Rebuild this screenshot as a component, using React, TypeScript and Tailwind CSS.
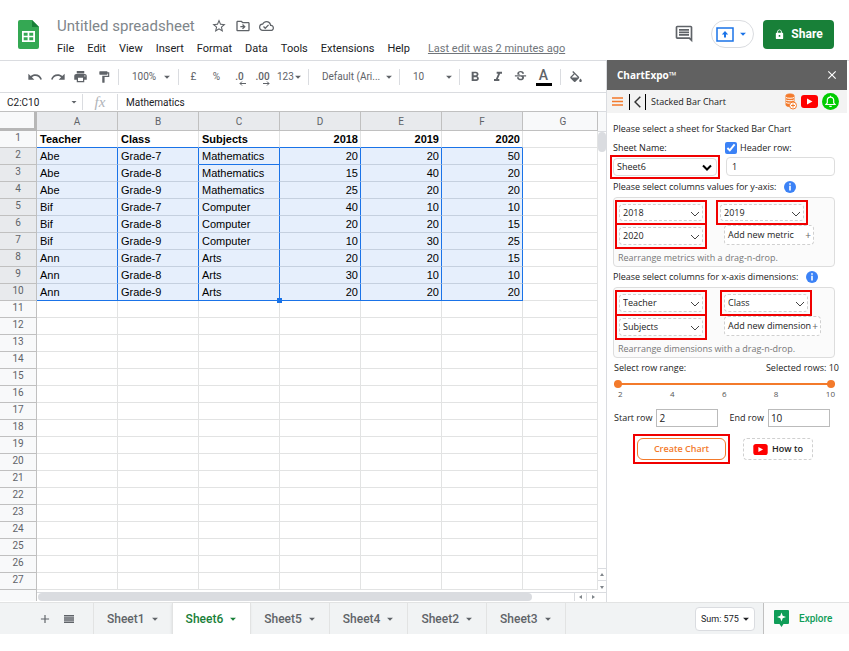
import React, { useState } from 'react';
import clsx from 'clsx';
import {
  MdAdd,
  MdArrowDropDown,
  MdClose,
  MdFormatBold,
  MdFormatItalic,
  MdFormatPaint,
  MdLock,
  MdOutlineCloudDone,
  MdOutlineDriveFileMove,
  MdOutlineInsertComment,
  MdPrint,
  MdRedo,
  MdStarBorder,
  MdStrikethroughS,
  MdUndo,
} from 'react-icons/md';

const MENUS = ['File', 'Edit', 'View', 'Insert', 'Format', 'Data', 'Tools', 'Extensions', 'Help'];
const COLUMNS = ['A', 'B', 'C', 'D', 'E', 'F', 'G'];
const SHEETS = ['Sheet1', 'Sheet6', 'Sheet5', 'Sheet4', 'Sheet2', 'Sheet3'];
const FIELDS = ['Teacher', 'Class', 'Subjects', '2018', '2019', '2020'];
const ROW_COUNT = 27;

const DATA: string[][] = [
  ['Teacher', 'Class', 'Subjects', '2018', '2019', '2020'],
  ['Abe', 'Grade-7', 'Mathematics', '20', '20', '50'],
  ['Abe', 'Grade-8', 'Mathematics', '15', '40', '20'],
  ['Abe', 'Grade-9', 'Mathematics', '25', '20', '20'],
  ['Bif', 'Grade-7', 'Computer', '40', '10', '10'],
  ['Bif', 'Grade-8', 'Computer', '20', '20', '15'],
  ['Bif', 'Grade-9', 'Computer', '10', '30', '25'],
  ['Ann', 'Grade-7', 'Arts', '20', '20', '15'],
  ['Ann', 'Grade-8', 'Arts', '30', '10', '10'],
  ['Ann', 'Grade-9', 'Arts', '20', '20', '20'],
];

const SheetsLogo: React.FC = () => (
  <svg viewBox="0 0 21 29" className="w-[21px] h-[29px]" aria-hidden="true">
    <path d="M2 0h12l7 7v20a2 2 0 0 1-2 2H2a2 2 0 0 1-2-2V2a2 2 0 0 1 2-2z" fill="#34a853" />
    <path d="M14 0l7 7h-7z" fill="#188038" />
    <path
      d="M4 11v11h13V11H4zm1.700 1.700h3.900v3h-3.900v-3zm5.600 0h3.900v3h-3.900v-3zm-5.600 4.600h3.900v3h-3.900v-3zm5.600 0h3.900v3h-3.900v-3z"
      fill="#fff"
    />
  </svg>
);

const YouTubeIcon: React.FC<{ className?: string }> = ({ className }) => (
  <svg viewBox="0 0 17 13" className={className} aria-hidden="true">
    <rect width="17" height="13" rx="3" fill="#f00" />
    <path d="M6 3.500v6l5.500-3z" fill="#fff" />
  </svg>
);

const InfoIcon: React.FC = () => (
  <svg viewBox="0 0 12 12" className="w-3 h-3" aria-hidden="true">
    <circle cx="6" cy="6" r="6" fill="#3b82f6" />
    <path d="M5.200 2.200h1.600v1.600H5.200zM5.200 4.800h1.600v4.700H5.200z" fill="#fff" />
  </svg>
);

const Chevron: React.FC<{ className?: string }> = ({ className }) => (
  <svg viewBox="0 0 10 6" className={className} fill="none" stroke="currentColor" aria-hidden="true">
    <path d="M1 1l4 4 4-4" />
  </svg>
);

const Separator = () => <span className="w-px h-4 bg-[#dadce0] shrink-0" />;

const ToolButton: React.FC<{ label: string; children: React.ReactNode }> = ({ label, children }) => (
  <button aria-label={label} className="w-[23px] h-6 flex items-center justify-center shrink-0">
    {children}
  </button>
);

const Header: React.FC = () => (
  <header className="flex h-[60px] pl-[18px] pr-[15px] border-b border-[#dadce0] box-content">
    <div className="pt-5">
      <SheetsLogo />
    </div>
    <div className="pl-[18px] pt-4 flex-1">
      <div className="flex items-center h-5 text-[#5f6368]">
        <h1 className="text-[15px] leading-5 text-[#80868b]">Untitled spreadsheet</h1>
        <div className="flex items-center gap-2 pl-4">
          <button aria-label="Star">
            <MdStarBorder className="w-4 h-4" />
          </button>
          <button aria-label="Move">
            <MdOutlineDriveFileMove className="w-4 h-4" />
          </button>
          <button aria-label="Document status">
            <MdOutlineCloudDone className="w-[15px] h-4" />
          </button>
        </div>
      </div>
      <nav className="flex items-center gap-[13px] pt-1 text-[11px] leading-[18px] text-[#202124]">
        {MENUS.map((menu) => (
          <button key={menu}>{menu}</button>
        ))}
        <a href="#history" className="pl-[5px] text-[#70757a] underline">
          Last edit was 2 minutes ago
        </a>
      </nav>
    </div>
    <div className="flex items-center h-7 mt-5">
      <button aria-label="Comments" className="text-[#5f6368]">
        <MdOutlineInsertComment className="w-5 h-5" />
      </button>
      <button
        aria-label="Present"
        className="flex items-center justify-center gap-0.5 ml-[17px] w-[43px] h-7 rounded-full border border-[#dadce0] text-[#1a73e8]"
      >
        <svg viewBox="0 0 18 15" className="w-[18px] h-[15px]" fill="none" stroke="currentColor" strokeWidth="1.500">
          <rect x="1" y="1" width="16" height="13" />
          <path d="M9 4l3.200 3.500H10v3H8v-3H5.800z" fill="currentColor" stroke="none" />
        </svg>
        <MdArrowDropDown className="w-3.5 h-3.5" />
      </button>
      <button className="flex items-center justify-center gap-1.5 ml-[9px] w-[71px] h-[29px] rounded bg-[#188038] text-white text-xs font-bold">
        <MdLock className="w-[11px] h-[11px]" />
        Share
      </button>
    </div>
  </header>
);

const Toolbar: React.FC = () => (
  <div className="flex items-center h-8 pl-[23px] border-b border-[#dadce0] text-[#5f6368] text-[10px]">
    <ToolButton label="Undo">
      <MdUndo className="w-4 h-4" />
    </ToolButton>
    <ToolButton label="Redo">
      <MdRedo className="w-4 h-4" />
    </ToolButton>
    <ToolButton label="Print">
      <MdPrint className="w-[15px] h-[15px]" />
    </ToolButton>
    <ToolButton label="Paint format">
      <MdFormatPaint className="w-[14px] h-[14px]" />
    </ToolButton>
    <span className="w-[3px]" />
    <Separator />
    <button className="flex items-center justify-between w-[59px] pl-[13px] pr-1">
      100%
      <MdArrowDropDown className="w-3.5 h-3.5" />
    </button>
    <Separator />
    <span className="w-[3px]" />
    <ToolButton label="Format as currency">£</ToolButton>
    <ToolButton label="Format as percent">%</ToolButton>
    <ToolButton label="Decrease decimal places">
      <span className="relative font-medium">
        .0
        <svg viewBox="0 0 7 5" className="absolute top-3 left-1 w-[7px] h-[5px]" fill="none" stroke="currentColor">
          <path d="M7 2.500H1M3 .5l-2 2 2 2" />
        </svg>
      </span>
    </ToolButton>
    <ToolButton label="Increase decimal places">
      <span className="relative font-medium">
        .00
        <svg viewBox="0 0 7 5" className="absolute top-3 left-2 w-[7px] h-[5px]" fill="none" stroke="currentColor">
          <path d="M0 2.500h6M4 .5l2 2-2 2" />
        </svg>
      </span>
    </ToolButton>
    <button className="flex items-center w-[34px] pl-[3px]">
      123
      <MdArrowDropDown className="w-3.5 h-3.5 shrink-0 -ml-[3px]" />
    </button>
    <Separator />
    <button className="flex items-center justify-between w-[90px] pl-[13px] pr-[3px]">
      Default (Ari...
      <MdArrowDropDown className="w-3.5 h-3.5" />
    </button>
    <Separator />
    <button className="flex items-center justify-between w-[59px] pl-[13px] pr-[3px]">
      10
      <MdArrowDropDown className="w-3.5 h-3.5" />
    </button>
    <Separator />
    <span className="w-[3px]" />
    <ToolButton label="Bold">
      <MdFormatBold className="w-4 h-4" />
    </ToolButton>
    <ToolButton label="Italic">
      <MdFormatItalic className="w-4 h-4" />
    </ToolButton>
    <ToolButton label="Strikethrough">
      <MdStrikethroughS className="w-[15px] h-[15px]" />
    </ToolButton>
    <ToolButton label="Text color">
      <span className="w-4 border-b-[3px] border-black text-sm leading-4 font-medium">A</span>
    </ToolButton>
    <span className="w-[5px]" />
    <Separator />
    <span className="w-[3px]" />
    <ToolButton label="Fill color">
      <svg viewBox="3 0 18 17" className="w-3 h-[11px]" fill="currentColor">
        <path d="M16.560 8.940L7.620 0 6.210 1.410l2.380 2.380-5.150 5.150c-.59.59-.59 1.540 0 2.120l5.500 5.500c.29.29.68.44 1.060.44s.77-.15 1.060-.44l5.500-5.500c.59-.58.59-1.530 0-2.120zM5.210 10L10 5.210 14.790 10H5.210zM19 11.500s-2 2.170-2 3.500c0 1.100.9 2 2 2s2-.9 2-2c0-1.330-2-3.500-2-3.500z" />
      </svg>
    </ToolButton>
  </div>
);

const FormulaBar: React.FC = () => (
  <div className="flex items-center h-[18px] text-[10px] text-[#202124]">
    <button className="flex items-center justify-between w-[82px] pl-[7px] pr-0.5">
      C2:C10
      <MdArrowDropDown className="w-3 h-3 text-[#5f6368]" />
    </button>
    <Separator />
    <span className="w-[34px] text-center font-['Liberation_Serif',serif] italic text-[15px] leading-4 text-[#b0b3b8]">fx</span>
    <Separator />
    <input aria-label="Formula" defaultValue="Mathematics" className="flex-1 min-w-0 pl-2 outline-none" />
  </div>
);

const cellClass = (row: number, col: number) => {
  const selected = row >= 2 && row <= 10 && col <= 5;
  return clsx(
    'relative h-[17px] p-0 px-[3px] border-r border-b leading-4 whitespace-nowrap',
    selected ? 'bg-[#e6effc]' : 'bg-white',
    col >= 3 ? 'text-right pr-0.5' : 'text-left',
    row === 1 && 'font-bold',
    selected ? 'border-r-[#1a73e8]' : 'border-r-[#e2e3e3]',
    (row === 1 || row === 10) && col <= 5
      ? 'border-b-[#1a73e8]'
      : row === 2 && col === 2
        ? 'border-b-[#1a73e8]'
        : selected
          ? 'border-b-[#c5d0df]'
          : 'border-b-[#e2e3e3]'
  );
};

const Grid: React.FC = () => (
  <div className="flex">
    <div className="flex-1 min-w-0">
      <table className="w-full table-fixed border-separate border-spacing-0 border-t border-[#c0c0c0] font-['Liberation_Sans',Arial,sans-serif] text-[11px] text-black">
        <colgroup>
          <col className="w-[37px]" />
          {COLUMNS.map((c) => (
            <col key={c} className={c === 'G' ? '' : 'w-[81px]'} />
          ))}
        </colgroup>
        <thead>
          <tr>
            <th className="h-[19px] p-0 bg-[#f8f9fa] border-r-[3px] border-b-[3px] border-[#b7b7b7]" />
            {COLUMNS.map((c) => (
              <th
                key={c}
                scope="col"
                className={clsx(
                  "p-0 pt-px h-[19px] border-r border-b border-[#c0c0c0] font-['Roboto',sans-serif] text-[10px] leading-4 font-normal text-[#5f6368]",
                  c === 'G' ? 'pl-1.5 bg-[#f8f9fa]' : 'bg-[#e8eaed]'
                )}
              >
                {c}
              </th>
            ))}
          </tr>
        </thead>
        <tbody>
          {Array.from({ length: ROW_COUNT }, (_, i) => i + 1).map((row) => (
            <tr key={row}>
              <th
                scope="row"
                className={clsx(
                  "h-[17px] p-0 pb-0.5 border-r border-b border-[#c0c0c0] font-['Roboto',sans-serif] text-[10px] leading-[14px] font-normal text-[#5f6368]",
                  row >= 2 && row <= 10 ? 'bg-[#e8eaed]' : 'bg-[#f8f9fa]'
                )}
              >
                {row}
              </th>
              {COLUMNS.map((c, col) => (
                <td key={c} className={cellClass(row, col)}>
                  {DATA[row - 1]?.[col]}
                  {row === 10 && col === 2 && (
                    <span className="absolute z-10 -right-[3px] -bottom-[3px] w-[5px] h-[5px] bg-[#1a73e8]" />
                  )}
                </td>
              ))}
            </tr>
          ))}
        </tbody>
      </table>
      <div className="flex h-3 pb-px">
        <span className="w-[37px] border-r border-[#c0c0c0] bg-[#f8f9fa]" />
        <div className="flex-1 flex flex-col">
          <div className="h-[3px] border-b border-[#dadce0]" />
          <div className="flex flex-1">
            <div className="flex-1 pr-[42px]">
              <div className="h-2 ml-px rounded-full bg-[#dadce0]" />
            </div>
            <button aria-label="Scroll left" className="w-3 flex items-center justify-center border-l border-[#dadce0]">
              <svg viewBox="0 0 4 4" className="w-1 h-1 fill-[#80868b]"><path d="M3 0v4L0 2z" /></svg>
            </button>
            <button aria-label="Scroll right" className="w-3 flex items-center justify-center border-l border-[#dadce0]">
              <svg viewBox="0 0 4 4" className="w-1 h-1 fill-[#80868b]"><path d="M1 0v4l3-2z" /></svg>
            </button>
          </div>
        </div>
      </div>
    </div>
    <div className="flex flex-col w-2 border-t border-[#dadce0] bg-white">
      <div className="h-5 bg-[#f8f9fa] border-b border-[#dadce0]" />
      <div className="flex-1">
        <div className="h-5 rounded-full bg-[#dadce0]" />
      </div>
      <button aria-label="Scroll up" className="h-3 flex items-center justify-center border-t border-[#dadce0]">
        <svg viewBox="0 0 4 4" className="w-1 h-1 fill-[#80868b]"><path d="M0 3h4L2 0z" /></svg>
      </button>
      <button aria-label="Scroll down" className="h-3 flex items-center justify-center border-t border-[#dadce0]">
        <svg viewBox="0 0 4 4" className="w-1 h-1 fill-[#80868b]"><path d="M0 1h4L2 4z" /></svg>
      </button>
      <div className="h-2.5 border-t border-[#dadce0]" />
    </div>
  </div>
);

const FieldSelect: React.FC<{ value: string; className?: string }> = ({ value, className }) => (
  <div className={clsx('relative w-[92px] p-0.5 border-2 border-[#f00000]', className)}>
    <select
      aria-label={`Column ${value}`}
      defaultValue={value}
      className="block w-full h-full pl-[3px] appearance-none rounded-sm border border-dashed border-[#d0d0d0] bg-white outline-none"
    >
      {FIELDS.map((f) => (
        <option key={f}>{f}</option>
      ))}
    </select>
    <Chevron className="absolute right-[5px] top-[9px] w-2.5 h-[6px] text-[#444] pointer-events-none" />
  </div>
);

const AddButton: React.FC<{ label: string; className?: string }> = ({ label, className }) => (
  <button
    className={clsx(
      'flex items-center justify-between h-5 pl-[3px] pr-0.5 rounded-sm border border-dashed border-[#d0d0d0] bg-white whitespace-nowrap',
      className
    )}
  >
    {label}
    <span className="text-[10px] leading-4 text-[#666]">+</span>
  </button>
);

const RangeSlider: React.FC = () => {
  const [start, setStart] = useState(2);
  const [end, setEnd] = useState(10);
  const rangeClass =
    'absolute inset-0 w-full h-2 appearance-none bg-transparent pointer-events-none [&::-webkit-slider-thumb]:appearance-none [&::-webkit-slider-thumb]:pointer-events-auto [&::-webkit-slider-thumb]:w-2 [&::-webkit-slider-thumb]:h-2 [&::-webkit-slider-thumb]:rounded-full [&::-webkit-slider-thumb]:bg-[#f37a2b]';

  return (
    <div className="pt-[5px] pr-1">
      <div className="relative h-2 flex items-center">
        <div className="w-full h-0.5 bg-[#f37a2b]" />
        <input aria-label="First row" type="range" min="2" max="10" value={start} onChange={(e) => setStart(parseInt(e.target.value))} className={rangeClass} />
        <input aria-label="Last row" type="range" min="2" max="10" value={end} onChange={(e) => setEnd(parseInt(e.target.value))} className={rangeClass} />
      </div>
      <div className="flex justify-between pl-1 text-[8px] leading-3 text-[#555]">
        {[2, 4, 6, 8, 10].map((n) => (
          <span key={n}>{n}</span>
        ))}
      </div>
    </div>
  );
};

const Sidebar: React.FC = () => (
  <aside className="w-[241px] mr-0.5 border-l border-[#dadce0] bg-white font-['Open_Sans','Noto_Sans',sans-serif] text-[9px] text-[#222]">
    <div className="flex items-center justify-between h-[30px] -mt-px box-content pl-2.5 pr-2 bg-[#616161] text-white">
      <h2 className="text-[10px] font-bold">ChartExpo™</h2>
      <button aria-label="Close">
        <MdClose className="w-3.5 h-3.5" />
      </button>
    </div>
    <div className="flex items-center h-[23px] pl-[5px] pr-2 bg-[#f3f3f3]">
      <button aria-label="Menu">
        <svg viewBox="0 0 11 9" className="w-[11px] h-[9px]" stroke="#f37a2b" strokeWidth="1.400">
          <path d="M0 1h11M0 4.500h11M0 8h11" />
        </svg>
      </button>
      <button aria-label="Back" className="flex items-center justify-center ml-1.5 w-[17px] h-4 border-x border-black">
        <svg viewBox="0 0 7 12" className="w-[7px] h-3" fill="none" stroke="#333" strokeWidth="1.500">
          <path d="M6.300.8L1 6l5.300 5.200" />
        </svg>
      </button>
      <h3 className="flex-1 pl-[5px]">Stacked Bar Chart</h3>
      <div className="flex items-center gap-1">
        <button aria-label="Data">
          <svg viewBox="0 0 12 17" className="w-3 h-[17px]" fill="none" stroke="#f37a2b">
            <path d="M1 2.500c0-2 8-2 8 0v9.500c0 2-8 2-8 0z" fill="#f37a2b" />
            <path d="M1 4.500c1 1 7 1 8 0M1 7c1 1 7 1 8 0M1 9.500c1 1 7 1 8 0" stroke="#fff" />
            <circle cx="8" cy="12.500" r="3.500" fill="#fff" />
            <path d="M8 10.500v4M6 12.500h4" />
          </svg>
        </button>
        <button aria-label="Video">
          <YouTubeIcon className="w-[17px] h-[13px]" />
        </button>
        <button aria-label="Notifications">
          <svg viewBox="0 0 17 17" className="w-[17px] h-[17px]" fill="none" stroke="#fff" strokeWidth="1.200">
            <circle cx="8.500" cy="8.500" r="8.500" fill="#0c0" stroke="none" />
            <path d="M4 11.500h9l-1.300-1.700V7.300a3.200 3.200 0 0 0-6.400 0v2.500zM8.500 4V2.700M7.300 13.300h2.400" />
          </svg>
        </button>
      </div>
    </div>

    <div className="pl-1.5 pr-3">
      <p className="pt-[9px] leading-[14px]">Please select a sheet for Stacked Bar Chart</p>
      <div className="grid grid-cols-2 gap-x-1 pt-[5px]">
        <div>
          <label htmlFor="sheet" className="block leading-[14px]">Sheet Name:</label>
          <div className="relative -ml-[3px] w-[110px] h-6 p-px border-2 border-[#f00000]">
            <select
              id="sheet"
              defaultValue="Sheet6"
              className="block w-full h-full pl-[3px] appearance-none rounded border border-[#ddd] bg-white outline-none"
            >
              {SHEETS.map((s) => (
                <option key={s}>{s}</option>
              ))}
            </select>
            <Chevron className="absolute right-1.5 top-[7px] w-2.5 h-[7px] text-black stroke-2 pointer-events-none" />
          </div>
        </div>
        <div>
          <label className="flex items-center gap-[3px] h-[14px]">
            <input type="checkbox" defaultChecked className="w-3 h-3 -ml-px accent-[#3b82f6]" />
            Header row:
          </label>
          <input
            aria-label="Header row number"
            defaultValue="1"
            className="block w-full h-[19px] mt-0.5 pl-[5px] rounded border border-[#ddd] outline-none"
          />
        </div>
      </div>

      <div className="flex items-center gap-2 h-[15px] mb-[3px]">
        Please select columns values for y-axis: <InfoIcon />
      </div>
      <div className="rounded border border-[#ddd] bg-[#fbfbfb] p-px pt-0.5">
        <div className="flex justify-between pr-[19px]">
          <div>
            <FieldSelect value="2018" className="h-[25px]" />
            <FieldSelect value="2020" className="h-[26px] -mt-0.5" />
          </div>
          <div>
            <FieldSelect value="2019" className="h-[25px]" />
            <AddButton label="Add new metric" className="w-[90px] ml-2" />
          </div>
        </div>
        <p className="pl-[3px] pt-0.5 leading-[14px] text-[#777]">Rearrange metrics with a drag-n-drop.</p>
      </div>

      <div className="flex items-center gap-2 h-5">
        Please select columns for x-axis dimensions: <InfoIcon />
      </div>
      <div className="rounded border border-[#ddd] bg-[#fbfbfb] p-px pt-0.5">
        <div className="flex justify-between pr-3">
          <div>
            <FieldSelect value="Teacher" className="h-[26px]" />
            <FieldSelect value="Subjects" className="h-[26px] -mt-0.5" />
          </div>
          <div>
            <FieldSelect value="Class" className="h-[26px]" />
            <AddButton label="Add new dimension" className="w-[97px] ml-1" />
          </div>
        </div>
        <p className="pl-[3px] pt-0.5 leading-[14px] text-[#777]">Rearrange dimensions with a drag-n-drop.</p>
      </div>
    </div>

    <div className="pl-[7px] pr-2 pt-[3px]">
      <div className="flex justify-between leading-[14px]">
        <span>Select row range:</span>
        <span>Selected rows: 10</span>
      </div>
      <RangeSlider />
    </div>

    <div className="flex items-center gap-1 pl-[7px] pt-[9px]">
      <label htmlFor="start-row">Start row</label>
      <input id="start-row" defaultValue="2" className="w-[62px] h-[18px] pl-0.5 border border-[#bbb] text-[10px] outline-none" />
      <label htmlFor="end-row" className="ml-[7px]">End row</label>
      <input id="end-row" defaultValue="10" className="w-[62px] h-[18px] pl-0.5 border border-[#bbb] text-[10px] outline-none" />
    </div>

    <div className="flex items-center gap-[13px] pl-[26px] pt-[7px]">
      <div className="w-[97px] h-[30px] p-0.5 border-2 border-[#f00000]">
        <button className="w-full h-full rounded-md border border-[#f37a2b] text-[#f37a2b] font-semibold">
          Create Chart
        </button>
      </div>
      <button className="flex items-center justify-center gap-1 w-[70px] h-[22px] rounded border border-dashed border-[#d0d0d0] font-semibold">
        <YouTubeIcon className="w-[15px] h-[11px]" />
        How to
      </button>
    </div>
  </aside>
);

const Footer: React.FC = () => {
  const [active, setActive] = useState('Sheet6');

  return (
    <footer className="flex h-8 border-t border-[#e2e3e3] bg-[#f1f3f4] text-xs text-[#5f6368]">
      <div className="flex items-center gap-3 w-[93px] pl-[38px]">
        <button aria-label="Add sheet">
          <MdAdd className="w-[14px] h-[14px]" />
        </button>
        <button aria-label="All sheets">
          <svg viewBox="0 0 10 8" className="w-2.5 h-2" stroke="currentColor" strokeWidth="1.500">
            <path d="M0 .8h10M0 2.900h10M0 5.100h10M0 7.200h10" />
          </svg>
        </button>
      </div>
      {SHEETS.map((sheet) => (
        <button
          key={sheet}
          onClick={() => setActive(sheet)}
          className={clsx(
            'flex items-center gap-[3px] pl-[13px] pr-2.5 border-l border-[#e2e3e3] font-medium',
            sheet === active && 'bg-white text-[#188038] shadow'
          )}
        >
          {sheet}
          <MdArrowDropDown className="w-3.5 h-3.5" />
        </button>
      ))}
      <div className="flex-1 flex items-center justify-end pr-2 border-l border-[#e2e3e3]">
        <button className="flex items-center justify-between w-[60px] h-6 pl-[5px] pr-px rounded border border-[#dadce0] bg-white text-[9px] text-[#202124] whitespace-nowrap">
          Sum: 575
          <MdArrowDropDown className="w-3.5 h-3.5 shrink-0" />
        </button>
      </div>
      <button className="flex items-center gap-2.5 w-[86px] pl-2.5 border-l border-[#c0c0c0] bg-[#fbfbfb] text-[10px] font-medium text-[#0f9d58]">
        <svg viewBox="0 0 15 17" className="w-[15px] h-[17px]" aria-hidden="true">
          <path d="M1 0h13a1 1 0 0 1 1 1v12a1 1 0 0 1-1 1H9.500l-2 3-2-3H1a1 1 0 0 1-1-1V1a1 1 0 0 1 1-1z" fill="#0f9d58" />
          <path d="M7.500 2.500l1.200 3.300L12 7l-3.300 1.200-1.200 3.300-1.200-3.300L3 7l3.300-1.200z" fill="#fff" />
        </svg>
        Explore
      </button>
    </footer>
  );
};

const App: React.FC = () => {
  return (
    <div className="bg-white font-['Roboto',sans-serif]">
      <Header />
      <div className="flex">
        <main className="flex-1 min-w-0">
          <Toolbar />
          <FormulaBar />
          <Grid />
        </main>
        <Sidebar />
      </div>
      <Footer />
    </div>
  );
};

export default App;
